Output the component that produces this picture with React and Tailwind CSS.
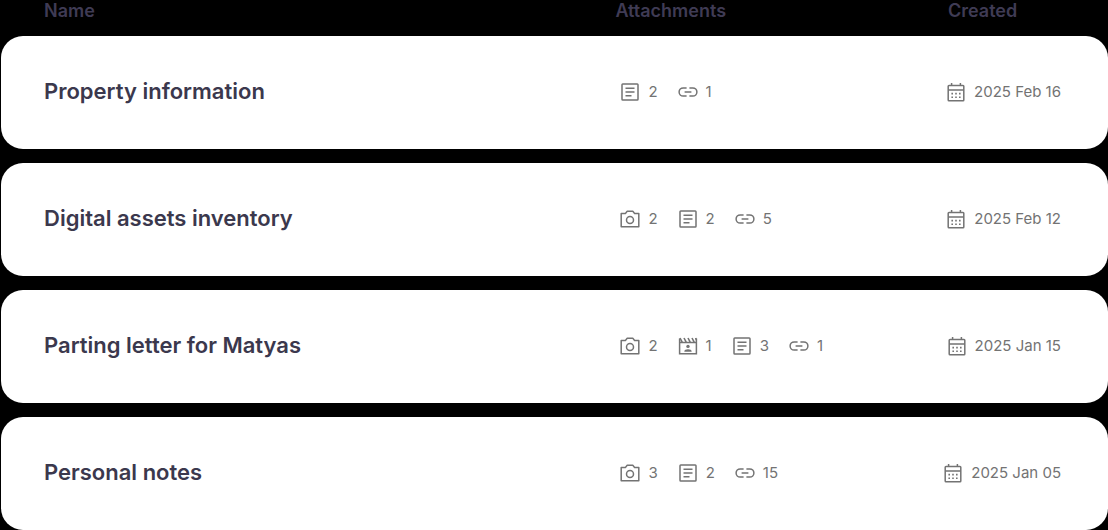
const documents = [
  {
    name: "Property information",
    attachments: [
      { type: "text", count: 2 },
      { type: "link", count: 1 },
    ],
    created: "2025 Feb 16",
  },
  {
    name: "Digital assets inventory",
    attachments: [
      { type: "photo", count: 2 },
      { type: "text", count: 2 },
      { type: "link", count: 5 },
    ],
    created: "2025 Feb 12",
  },
  {
    name: "Parting letter for Matyas",
    attachments: [
      { type: "photo", count: 2 },
      { type: "video", count: 1 },
      { type: "text", count: 3 },
      { type: "link", count: 1 },
    ],
    created: "2025 Jan 15",
  },
  {
    name: "Personal notes",
    attachments: [
      { type: "photo", count: 3 },
      { type: "text", count: 2 },
      { type: "link", count: 15 },
    ],
    created: "2025 Jan 05",
  },
];

const Icon = ({ children }) => (
  <svg
    viewBox="0 0 20 20"
    className="w-5 h-5 shrink-0"
    fill="none"
    stroke="currentColor"
    strokeWidth="1.5"
    aria-hidden="true"
  >
    {children}
  </svg>
);

const icons = {
  photo: (
    <Icon>
      <path d="M1.2 4.4h4.2l1.8-2.1h5.6l1.8 2.1h4.2v13.4H1.2z" strokeLinejoin="round" />
      <circle cx="10" cy="11" r="3.5" />
    </Icon>
  ),
  text: (
    <Icon>
      <rect x="2" y="2" width="16" height="16" rx="0.8" />
      <path d="M5.5 6.3h9M5.5 10h9M5.5 13.7h6" />
    </Icon>
  ),
  video: (
    <Icon>
      <path d="M1.6 2.6v15.2h16.8V2.6M1.6 6.6h16.8" />
      <path d="M2 2l2.2 4.2M6 2l2.2 4.2M10 2l2.2 4.2M14 2l2.2 4.2M17.6 2l.8 2" strokeWidth="1.6" />
      <circle cx="10" cy="10.4" r="1.7" fill="currentColor" stroke="none" />
      <path d="M6.3 15.8c0-1.8 1.6-2.5 3.7-2.5s3.7.7 3.7 2.5z" fill="currentColor" stroke="none" />
    </Icon>
  ),
  link: (
    <Icon>
      <path d="M8.6 5.9H5.2a4.1 4.1 0 0 0 0 8.2h3.4M11.4 5.9h3.4a4.1 4.1 0 0 1 0 8.2h-3.4M6.6 10h6.8" />
    </Icon>
  ),
  calendar: (
    <Icon>
      <rect x="2.2" y="3.4" width="15.6" height="15.4" rx="0.8" />
      <path d="M2.2 8h15.6M5.6 1v2.4M14.4 1v2.4" />
      <path
        d="M5.4 11.6h1.6M9.2 11.6h1.6M13 11.6h1.6M5.4 15.2h1.6M9.2 15.2h1.6M13 15.2h1.6"
        strokeWidth="1.6"
      />
    </Icon>
  ),
};

const App = () => {
  return (
    <div className="bg-black pl-px overflow-hidden font-['Inter',sans-serif]">
      <table className="w-full table-fixed border-separate border-spacing-x-0 border-spacing-y-[14px] -my-[14px]">
        <colgroup>
          <col className="w-[55.5%]" />
          <col />
          <col className="w-[196px]" />
        </colgroup>
        <thead>
          <tr className="h-[22px] text-left text-[18px] leading-5 text-[#3f3b54]">
            <th className="p-0 pl-[43px] font-semibold">Name</th>
            <th className="p-0 font-semibold">Attachments</th>
            <th className="p-0 pl-9 font-semibold">Created</th>
          </tr>
        </thead>
        <tbody>
          {documents.map((doc) => (
            <tr key={doc.name} className="h-[113px] text-[15px] leading-5 text-[#737373]">
              <td className="p-0 pl-[43px] pb-1 bg-white rounded-l-[22px] text-[22px] leading-7 font-semibold text-[#3b384d]">
                {doc.name}
              </td>
              <td className="p-0 pl-[5px] pb-0.5 bg-white">
                <div className="flex items-center gap-5">
                  {doc.attachments.map((item) => (
                    <span key={item.type} className="flex items-center gap-2">
                      {icons[item.type]}
                      {item.count}
                    </span>
                  ))}
                </div>
              </td>
              <td className="p-0 pr-[47px] pb-0.5 bg-white rounded-r-[22px]">
                <div className="flex items-center justify-end gap-2">
                  {icons.calendar}
                  <time className="whitespace-nowrap">{doc.created}</time>
                </div>
              </td>
            </tr>
          ))}
        </tbody>
      </table>
    </div>
  );
};

export default App;
